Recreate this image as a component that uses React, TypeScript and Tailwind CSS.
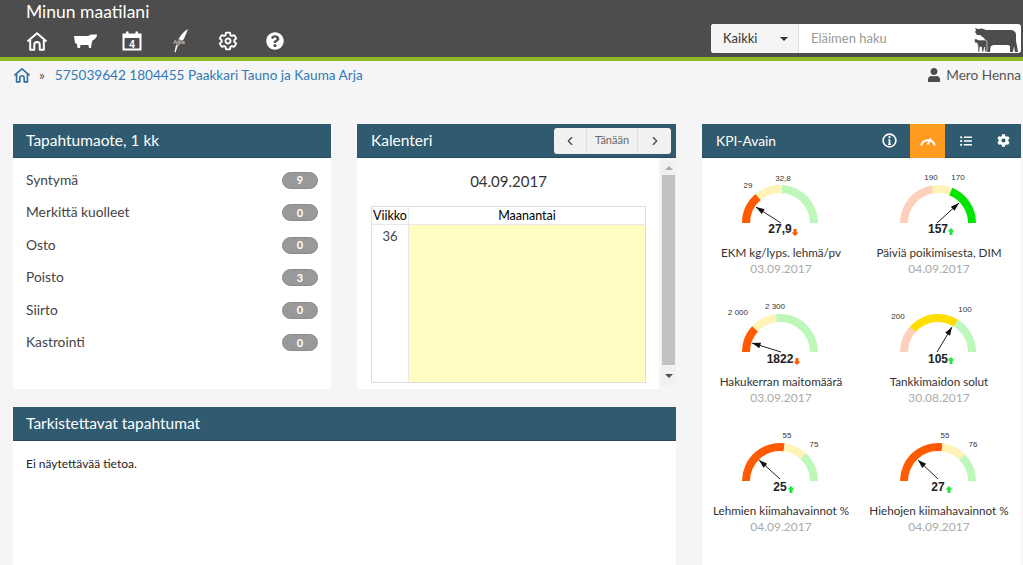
import { ChevronLeft, ChevronRight } from "lucide-react";
import { FaCog, FaListUl, FaQuestionCircle, FaUser } from "react-icons/fa";
import { IoSettingsOutline } from "react-icons/io5";

const RED = "#ff5a00";
const PALE_YELLOW = "#fff3b8";
const PALE_GREEN = "#bdf7b9";
const PINK = "#fcd0bb";
const GREEN = "#00e600";
const YELLOW = "#ffdf00";

const events = [
  { name: "Syntymä", count: 9 },
  { name: "Merkittä kuolleet", count: 0 },
  { name: "Osto", count: 0 },
  { name: "Poisto", count: 3 },
  { name: "Siirto", count: 0 },
  { name: "Kastrointi", count: 0 },
];

interface Kpi {
  title: string;
  date: string;
  value: string;
  valueDy: number;
  arrowDx: number;
  up: boolean;
  segments: [number, number, string][];
  ticks: [string, number, number][];
  needle: [number, number, number, number];
}

const kpis: Kpi[] = [
  {
    title: "EKM kg/lyps. lehmä/pv",
    date: "03.09.2017",
    value: "27,9",
    valueDy: 5,
    arrowDx: 15,
    up: false,
    segments: [[0, 50, RED], [50, 93, PALE_YELLOW], [93, 180, PALE_GREEN]],
    ticks: [["29", -32, -38], ["32,8", 3, -45]],
    needle: [1, 0, -24, -16],
  },
  {
    title: "Päiviä poikimisesta, DIM",
    date: "04.09.2017",
    value: "157",
    valueDy: 5,
    arrowDx: 13,
    up: true,
    segments: [[0, 81, PINK], [81, 112, PALE_YELLOW], [112, 180, GREEN]],
    ticks: [["190", -7, -46], ["170", 20, -46]],
    needle: [-1, 0, 21, -20],
  },
  {
    title: "Hakukerran maitomäärä",
    date: "03.09.2017",
    value: "1822",
    valueDy: 6,
    arrowDx: 17,
    up: false,
    segments: [[0, 43, RED], [43, 84, PALE_YELLOW], [84, 180, PALE_GREEN]],
    ticks: [["2 000", -42, -40], ["2 300", -5, -46]],
    needle: [1, 0, -28, -9],
  },
  {
    title: "Tankkimaidon solut",
    date: "30.08.2017",
    value: "105",
    valueDy: 6,
    arrowDx: 13,
    up: true,
    segments: [[0, 42, PINK], [42, 122, YELLOW], [122, 180, PALE_GREEN]],
    ticks: [["200", -40, -36], ["100", 27, -43]],
    needle: [-1, 0, 14, -25],
  },
  {
    title: "Lehmien kiimahavainnot %",
    date: "04.09.2017",
    value: "25",
    valueDy: 5,
    arrowDx: 11,
    up: true,
    segments: [[0, 97, RED], [97, 133, PALE_YELLOW], [133, 180, PALE_GREEN]],
    ticks: [["55", 7, -46], ["75", 34, -37]],
    needle: [0, -2, -21, -21],
  },
  {
    title: "Hiehojen kiimahavainnot %",
    date: "04.09.2017",
    value: "27",
    valueDy: 5,
    arrowDx: 11,
    up: true,
    segments: [[0, 97, RED], [97, 135, PALE_YELLOW], [135, 180, PALE_GREEN]],
    ticks: [["55", 7, -46], ["76", 35, -37]],
    needle: [0, -2, -20, -21],
  },
];

function arcPath(cx: number, cy: number, from: number, to: number) {
  const R = 38;
  const r = 30;
  const pt = (rad: number, deg: number) => {
    const a = (deg * Math.PI) / 180;
    return `${(cx - rad * Math.cos(a)).toFixed(2)} ${(cy - rad * Math.sin(a)).toFixed(2)}`;
  };
  return `M${pt(R, from)} A${R} ${R} 0 0 1 ${pt(R, to)} L${pt(r, to)} A${r} ${r} 0 0 0 ${pt(r, from)} Z`;
}

function Gauge({ kpi }: { kpi: Kpi }) {
  const cx = 59;
  const cy = 58;
  const [x1, y1, x2, y2] = kpi.needle;
  const angle = Math.atan2(y2 - y1, x2 - x1);
  const head = (len: number, spread: number) =>
    `${cx + x2 - len * Math.cos(angle + spread)},${cy + y2 - len * Math.sin(angle + spread)}`;
  const ax = cx + kpi.arrowDx;
  const ay = cy + 9;
  return (
    <svg width="120" height="74" viewBox="0 0 120 74" className="block mx-auto">
      {kpi.segments.map(([from, to, color]) => (
        <path key={from} d={arcPath(cx, cy, from, to)} fill={color} />
      ))}
      {kpi.ticks.map(([label, dx, dy]) => (
        <text
          key={label}
          x={cx + dx}
          y={cy + dy + 3}
          textAnchor="middle"
          fontSize="8"
          fontFamily="Liberation Sans, Arial, sans-serif"
          fill="#333">
          {label}
        </text>
      ))}
      <line
        x1={cx + x1}
        y1={cy + y1}
        x2={cx + x2}
        y2={cy + y2}
        stroke="#222"
        strokeWidth="1"
      />
      <polygon
        points={`${cx + x2},${cy + y2} ${head(9, 0.32)} ${head(9, -0.32)}`}
        fill="#111"
      />
      <text
        x={cx}
        y={cy + kpi.valueDy + 4.5}
        textAnchor="middle"
        fontSize="12"
        fontWeight="700"
        fontFamily="Liberation Sans, Arial, sans-serif"
        fill="#222">
        {kpi.value}
      </text>
      {kpi.up ? (
        <path
          d={`M${ax} ${ay - 4}l3.500 3.500h-2v3.500h-3v-3.500h-2z`}
          fill="#22e63a"
        />
      ) : (
        <path
          d={`M${ax} ${ay + 4}l3.500 -3.500h-2v-3.500h-3v3.500h-2z`}
          fill={RED}
        />
      )}
    </svg>
  );
}

function HomeIcon({ className }: { className?: string }) {
  return (
    <svg viewBox="0 0 24 22" fill="none" stroke="currentColor" strokeWidth="2.2" className={className}>
      <path d="M1.500 11.500 12 2.500l10.500 9" strokeLinejoin="round" />
      <path d="M4.500 9.500V20.500h4.500V15a3 3 0 0 1 6 0v5.500h4.500V9.500" strokeLinejoin="round" />
    </svg>
  );
}

function CowIcon() {
  return (
    <svg viewBox="0 0 23 14" width="23" height="14" fill="currentColor">
      <path d="M0 2h14l3-1.500h6V2l-2 3-2.500 1.500-1 3.500-.5 4h-2l-.5-3h-8l-.5 3H3.500L3 10 1 9z" />
    </svg>
  );
}

function CalendarIcon() {
  return (
    <svg viewBox="0 0 20 20" width="20" height="20">
      <path d="M1.500 3.500h17v15h-17z" fill="none" stroke="currentColor" strokeWidth="2" />
      <path d="M1 3h18v4H1zM4 .5h2.500V5H4zM13.500.5H16V5h-2.500z" fill="currentColor" />
      <text x="10" y="16.500" textAnchor="middle" fontSize="10" fontWeight="700" fontFamily="Liberation Sans, sans-serif" fill="currentColor">
        4
      </text>
    </svg>
  );
}

function FeatherLogo() {
  return (
    <svg viewBox="0 0 22 24" width="22" height="24">
      <path d="M18 0C13 3 8 9 6 16l-1.500 7 1 .5 2-6C12 15 15 8 18 0z" fill="#fff" />
      <text x="9" y="15" textAnchor="middle" fontSize="6" fontFamily="Liberation Sans, sans-serif" fill="#ddd" stroke="#4d4d4d" strokeWidth="1.200" paintOrder="stroke">
        Ajka
      </text>
    </svg>
  );
}

function CowsWatermark() {
  return (
    <svg viewBox="0 0 44 26" width="44" height="26" fill="#4d4d4d" className="absolute right-[3px] bottom-0">
      <path d="M1 1l3 1 4-.5L12 3h24c4 0 6 2 6 5v6l1 5 1 6h-3l-1-6-1 6h-3v-6l-2-1H20c-2 0-3 1-3.500 2L16 25h-3l-.5-9-2.500-5-4-3H3L1 5l1-2z" />
      <path d="M0 12h3l1 1h8l1 2v10h-2l-.5-5-1 5H8l-.5-5H6l-.5 5H4v-6l-1-3H1z" stroke="#fff" strokeWidth=".6" />
    </svg>
  );
}

function GaugeIcon() {
  return (
    <svg viewBox="0 0 16 11" width="16" height="11" fill="none" stroke="#fff">
      <path d="M1.200 10.500A7 7 0 0 1 14.800 10.500" strokeWidth="2" />
      <path d="M7.500 9.500 11 3.500" strokeWidth="1.800" />
    </svg>
  );
}

function InfoIcon() {
  return (
    <svg viewBox="0 0 16 16" width="15" height="15" fill="none" stroke="#fff">
      <circle cx="8" cy="8" r="6.800" strokeWidth="1.800" />
      <path d="M8 7v5M6.500 12h3M6.800 7H8" strokeWidth="1.800" />
      <circle cx="8" cy="4.300" r="1.200" fill="#fff" stroke="none" />
    </svg>
  );
}

function PanelHeader({ title }: { title: string }) {
  return (
    <div className="h-[34px] px-[13px] pt-px flex items-center bg-[#2f5a70] border-b border-[#264a5d] text-[15.5px] text-white">
      {title}
    </div>
  );
}

export default function App() {
  return (
    <div
      className="h-[565px] overflow-hidden bg-[#f5f5f5] text-[#333]"
      style={{ fontFamily: "Lato, 'Noto Sans', sans-serif" }}>
      <header className="h-[61px] bg-[#4d4d4d] border-b-4 border-[#8ab81e] flex justify-between pr-[2px] text-white">
        <div className="pl-[26px]">
          <div className="text-[17.5px] leading-[22px] mt-px">Minun maatilani</div>
          <nav className="flex items-center h-[24px] mt-[6px]">
            <div className="w-[48px]"><HomeIcon className="w-[22px] h-[20px]" /></div>
            <div className="w-[48px]"><CowIcon /></div>
            <div className="w-[48px]"><CalendarIcon /></div>
            <div className="w-[48px]"><FeatherLogo /></div>
            <div className="w-[48px]"><IoSettingsOutline size={20} className="[&_path]:[stroke-width:48]" /></div>
            <div className="w-[48px]"><FaQuestionCircle size={18} /></div>
          </nav>
        </div>
        <div className="self-end mb-[4px] flex w-[310px] h-[29px] rounded-[3px] overflow-hidden bg-white text-[13px]">
          <div className="w-[88px] bg-[#f5f5f5] border-r border-[#e0e0e0] flex items-center justify-between pl-[12px] pr-[10px] text-[#333]">
            Kaikki
            <span className="w-0 h-0 border-x-[4px] border-x-transparent border-t-[4px] border-t-[#333]" />
          </div>
          <div className="relative flex-1 flex items-center pl-[12px] text-[#999]">
            Eläimen haku
            <CowsWatermark />
          </div>
        </div>
      </header>

      <div className="h-[63px] pl-[13px] pr-[2px] flex justify-between pt-[5px] text-[13.6px] leading-[18px]">
        <div className="flex items-start">
          <HomeIcon className="w-[18px] h-[16px] mt-px text-[#2f6f9f]" />
          <span className="ml-[8px] mr-[10px] text-[#555]">»</span>
          <span className="text-[#337ab7]">575039642 1804455 Paakkari Tauno ja Kauma Arja</span>
        </div>
        <div className="flex items-start text-[#555]">
          <FaUser size={14} className="mt-[2px] mr-[5px] text-[#4d4d4d]" />
          Mero Henna
        </div>
      </div>

      <main className="flex gap-[26px] pl-[13px] pr-[2px]">
        <div className="w-[663px]">
          <div className="flex gap-[26px] h-[265px]">
            <section className="w-[318px] bg-white">
              <PanelHeader title="Tapahtumaote, 1 kk" />
              <ul className="pt-[6px] px-[13px]">
                {events.map((e) => (
                  <li key={e.name} className="h-[32.5px] flex items-center justify-between text-[13.800px] text-[#444]">
                    {e.name}
                    <span className="w-[36px] h-[17px] rounded-full bg-[#999] border border-[#8c8c8c] flex items-center justify-center text-[11px] font-bold text-white">
                      {e.count}
                    </span>
                  </li>
                ))}
              </ul>
            </section>

            <section className="w-[319px] flex flex-col">
              <div className="h-[34px] pl-[14px] pr-[5px] flex items-center justify-between bg-[#2f5a70] border-b border-[#264a5d] text-[15.5px] text-white">
                Kalenteri
                <div className="flex h-[26px] w-[117px] rounded-[3px] bg-[#f1f1f1] text-[#444] divide-x divide-[#dedede]">
                  <div className="w-[33px] flex items-center justify-center"><ChevronLeft size={14} /></div>
                  <div className="flex-1 flex items-center justify-center text-[11px] text-[#666]">Tänään</div>
                  <div className="w-[33px] flex items-center justify-center"><ChevronRight size={14} /></div>
                </div>
              </div>
              <div className="flex-1 flex">
                <div className="w-[302px] bg-white pl-[14px] pr-[13px]">
                  <div className="h-[48px] pt-[13px] text-center text-[15px] leading-[20px] text-[#333]">04.09.2017</div>
                  <div className="h-[177px] border border-[#ddd] flex text-[12.5px]">
                    <div className="w-[37px] border-r border-[#e8e8e8]">
                      <div className="h-[18px] border-b border-[#e8e8e8] text-center leading-[17px] text-black">Viikko</div>
                      <div className="pt-[2px] text-center text-[13px] text-[#444]">36</div>
                    </div>
                    <div className="flex-1 flex flex-col">
                      <div className="h-[18px] border-b border-[#e8e8e8] text-center leading-[17px] text-black">Maanantai</div>
                      <div className="flex-1 bg-[#fffcc2]" />
                    </div>
                  </div>
                </div>
                <div className="flex-1 flex flex-col items-center mt-[3px] mb-[3px] ml-[2px] bg-[#f1f1f1]">
                  <div className="h-[14px] flex items-center">
                    <span className="w-0 h-0 border-x-[4px] border-x-transparent border-b-[4px] border-b-[#aaa]" />
                  </div>
                  <div className="w-[13px] flex-1 bg-[#c1c1c1]" />
                  <div className="h-[21px] flex items-center">
                    <span className="w-0 h-0 border-x-[4px] border-x-transparent border-t-[4px] border-t-[#505050]" />
                  </div>
                </div>
              </div>
            </section>
          </div>

          <section className="mt-[18px] h-[200px] bg-white">
            <PanelHeader title="Tarkistettavat tapahtumat" />
            <p className="px-[13px] pt-[15px] text-[12px] leading-[16px] text-[#222]">Ei näytettävää tietoa.</p>
          </section>
        </div>

        <section className="w-[319px] h-[460px] bg-white">
          <div className="h-[34px] pl-[14px] flex items-center bg-[#2f5a70] border-b border-[#264a5d] text-[13.800px] text-white">
            <span className="flex-1 pt-px">KPI-Avain</span>
            <div className="w-[15px] mr-[13px]"><InfoIcon /></div>
            <div className="w-[35px] h-[34px] bg-[#ff9c1f] flex items-center justify-center"><GaugeIcon /></div>
            <div className="w-[42px] flex justify-center"><FaListUl size={12} /></div>
            <div className="w-[34px] flex justify-center pr-[2px]"><FaCog size={13} /></div>
          </div>
          <div className="grid grid-cols-2 pr-[3px] pt-[7px]">
            {kpis.map((kpi) => (
              <div key={kpi.title} className="h-[129px] text-center">
                <Gauge kpi={kpi} />
                <div className="mt-[4px] text-[11.700px] leading-[18px] text-[#333] whitespace-nowrap">{kpi.title}</div>
                <div className="text-[12px] leading-[16px] text-[#aaa]">{kpi.date}</div>
              </div>
            ))}
          </div>
        </section>
      </main>
    </div>
  );
}
